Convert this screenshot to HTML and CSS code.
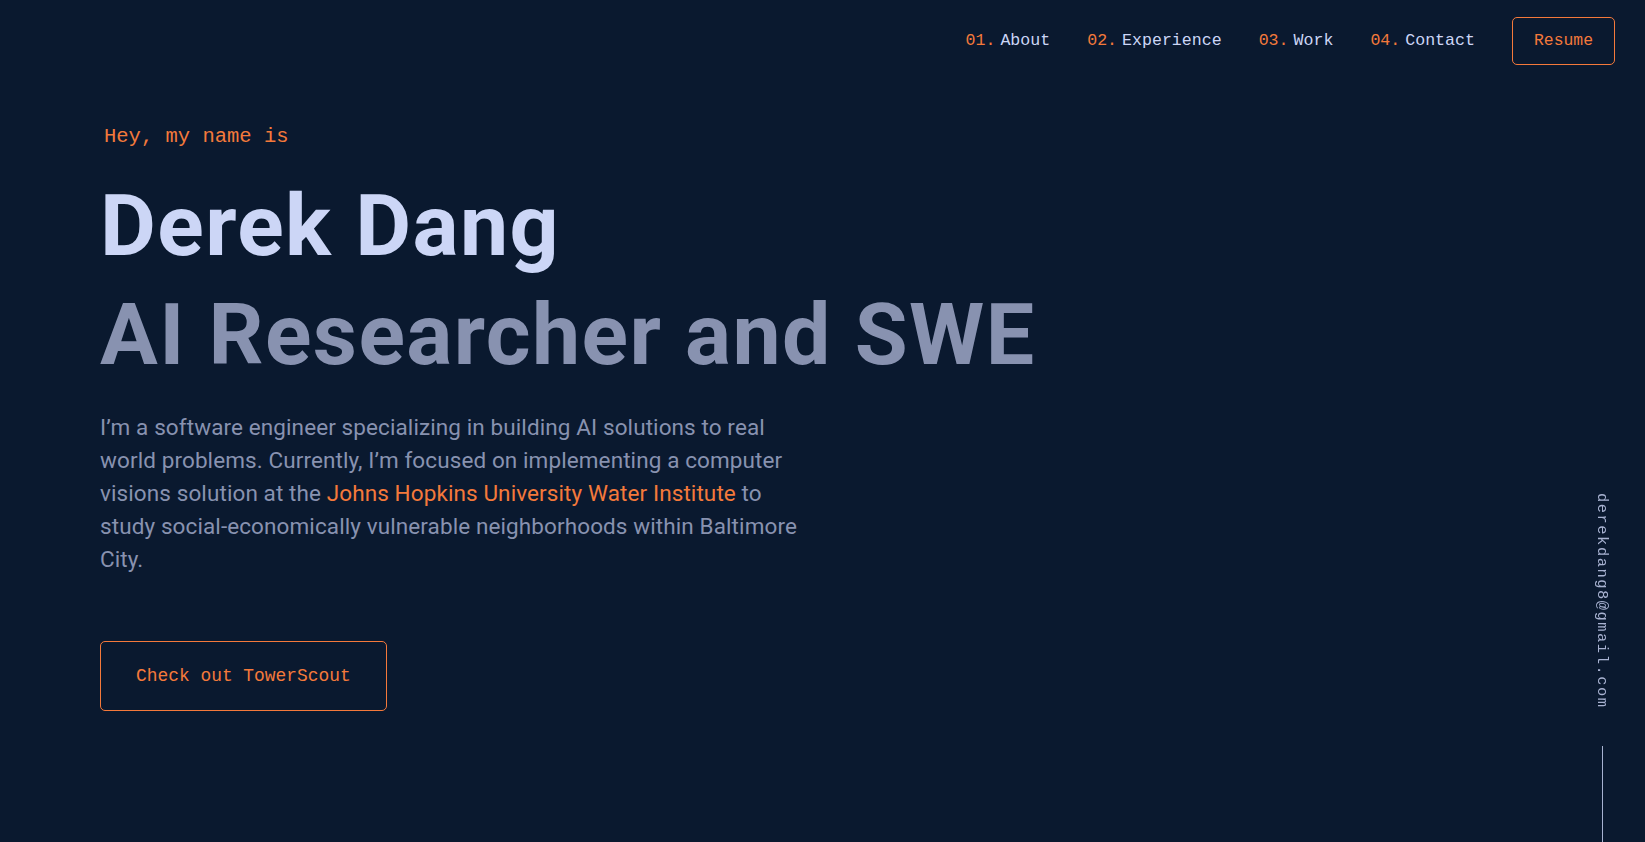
FILE: index.html
```html
<!DOCTYPE html>
<html lang="en">
<head>
<meta charset="utf-8">
<title>Derek Dang</title>
<link rel="stylesheet" href="styles.css">
</head>
<body>
<header class="nav">
  <ol class="nav-links">
    <li><a href="#about"><span class="num">01.</span>About</a></li>
    <li><a href="#experience"><span class="num">02.</span>Experience</a></li>
    <li><a href="#work"><span class="num">03.</span>Work</a></li>
    <li><a href="#contact"><span class="num">04.</span>Contact</a></li>
  </ol>
  <a class="resume" href="#resume">Resume</a>
</header>

<main class="hero">
  <h1 class="hello">Hey, my name is</h1>
  <h2 class="name">Derek Dang</h2>
  <h3 class="role">AI Researcher and SWE</h3>
  <p class="intro">I’m a software engineer specializing in building AI solutions to real world problems. Currently, I’m focused on implementing a computer visions solution at the <a href="#jhu">Johns Hopkins University Water Institute</a> to study social-economically vulnerable neighborhoods within Baltimore City.</p>
  <a class="cta" href="#towerscout">Check out TowerScout</a>
</main>

<aside class="email">
  <a href="mailto:derekdang8@gmail.com">derekdang8@gmail.com</a>
</aside>
</body>
</html>
```

FILE: styles.css
```css
* { box-sizing: border-box; }

html, body {
  margin: 0;
  padding: 0;
  background: #0a192f;
  height: 100%;
  overflow: hidden;
}

body {
  color: #8892b0;
  font-family: "Roboto", "Liberation Sans", sans-serif;
}

a { text-decoration: none; color: inherit; }

.nav {
  height: 81px;
  display: flex;
  justify-content: flex-end;
  align-items: center;
  padding-right: 30px;
}

.nav-links {
  list-style: none;
  margin: 0;
  padding: 0;
  display: flex;
  gap: 37px;
  font-family: "Liberation Mono", monospace;
  font-size: 16.6px;
  color: #ccd6f6;
}

.nav-links .num {
  color: #f4793b;
  margin-right: 5px;
}

.resume {
  margin-left: 37px;
  height: 48px;
  padding: 0 21px;
  display: inline-flex;
  align-items: center;
  border: 1px solid #f4793b;
  border-radius: 5px;
  color: #f4793b;
  font-family: "Liberation Mono", monospace;
  font-size: 16.4px;
}

.hero {
  padding-left: 100px;
  display: flex;
  flex-direction: column;
  align-items: flex-start;
}

.hello {
  margin: 44px 0 0 4px;
  font-family: "Liberation Mono", monospace;
  font-weight: 400;
  font-size: 20.5px;
  line-height: 24px;
  color: #f4793b;
}

.name, .role {
  margin: 0;
  font-family: "Roboto", "Liberation Sans", sans-serif;
  font-weight: 700;
  font-size: 86px;
  line-height: 95px;
  letter-spacing: 1.4px;
}

.name {
  margin-top: 29px;
  color: #ccd6f6;
}

.role {
  margin-top: 14px;
  color: #8892b0;
}

.intro {
  margin: 29px 0 0 0;
  max-width: 705px;
  font-size: 22.5px;
  letter-spacing: 0.1px;
  line-height: 33px;
  color: #8892b0;
}

.intro a { color: #f4793b; }

.cta {
  margin-top: 65px;
  height: 70px;
  padding: 0 35px;
  display: inline-flex;
  align-items: center;
  border: 1px solid #f4793b;
  border-radius: 5px;
  color: #f4793b;
  font-family: "Liberation Mono", monospace;
  font-size: 17.9px;
}

.email {
  position: fixed;
  right: 33px;
  bottom: 0;
  width: 20px;
  display: flex;
  flex-direction: column;
  align-items: center;
}

.email a {
  writing-mode: vertical-rl;
  font-family: "Liberation Mono", monospace;
  font-size: 15.4px;
  letter-spacing: 0.1em;
  color: #a8b2d1;
  margin-bottom: 37px;
  line-height: 18px;
}

.email::after {
  content: "";
  display: block;
  width: 1px;
  height: 96px;
  background: #a8b2d1;
}
```
